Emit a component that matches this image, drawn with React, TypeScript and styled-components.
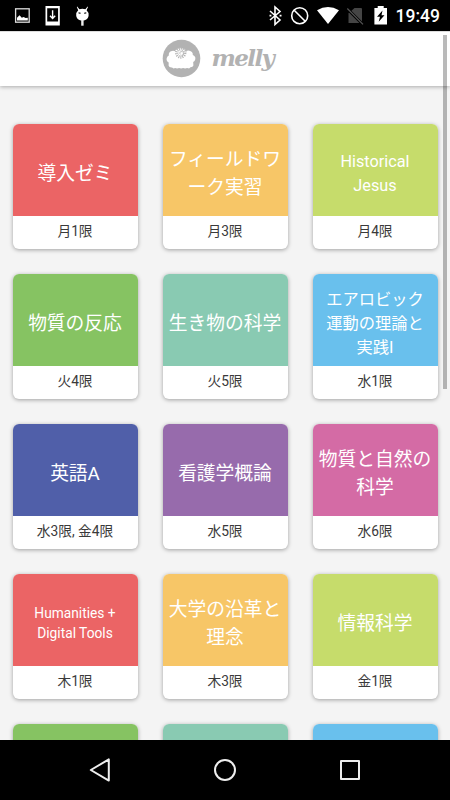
import styled, { createGlobalStyle } from "styled-components";

const GlobalStyle = createGlobalStyle`
  * {
    box-sizing: border-box;
  }
  body {
    margin: 0;
    overflow: hidden;
    background-color: #000;
    font-family: Roboto, "Noto Sans CJK JP", sans-serif;
  }
`;

const Screen = styled.div`
  position: relative;
  width: 450px;
  height: 800px;
  display: flex;
  flex-direction: column;
  overflow: hidden;
`;

const StatusBar = styled.div`
  flex: 0 0 31px;
  height: 31px;
  min-height: 0;
  display: flex;
  justify-content: space-between;
  background-color: #000;
  color: #fff;
`;

const Clock = styled.span`
  width: 60px;
  height: 31px;
  padding-left: 5.5px;
  font-size: 17.5px;
  line-height: 32px;
  font-weight: 500;
`;

const StatusRight = styled.div`
  display: flex;
`;

const Header = styled.header`
  flex: 0 0 55px;
  display: flex;
  justify-content: center;
  gap: 11px;
  padding: 7px 12px 0 0;
  border-top: 1px solid #ddd;
  background-color: #fff;
  box-shadow: 0 1px 4px rgba(0, 0, 0, 0.3);
  z-index: 1;
`;

const LogoText = styled.span`
  width: 65px;
  color: #b2b2b2;
  font-family: "DejaVu Serif", serif;
  font-size: 23px;
  font-style: italic;
  font-weight: bold;
  letter-spacing: -1.6px;
  line-height: 37px;
  white-space: nowrap;
`;

const Content = styled.main`
  flex: 1 1 0;
  overflow: hidden;
  background-color: #f4f4f4;
`;

const ScrollThumb = styled.div`
  position: absolute;
  top: 35px;
  right: 3.5px;
  width: 4px;
  height: 354px;
  background-color: rgba(0, 0, 0, 0.27);
  z-index: 2;
`;

const CardGrid = styled.div`
  display: grid;
  grid-template-columns: repeat(3, 125px);
  gap: 25px;
  padding: 37.5px 12.5px;
`;

const Card = styled.div`
  height: 125px;
  display: flex;
  flex-direction: column;
  overflow: hidden;
  border-radius: 6px;
  background-color: #fff;
  box-shadow: 0 1px 4px rgba(0, 0, 0, 0.35);
`;

const CardTitle = styled.div<{ $color: string; $size: number; $line: number }>`
  flex: 0 0 92.5px;
  display: flex;
  justify-content: center;
  align-items: center;
  padding-top: ${(p) => (p.$size < 15 ? 7 : 9)}px;
  background-color: ${(p) => p.$color};
  color: #fff;
  font-size: ${(p) => p.$size}px;
  line-height: ${(p) => p.$line}px;
  text-align: center;
  white-space: pre;
`;

const CardPeriod = styled.div`
  color: #3a3a3a;
  font-size: 13.75px;
  line-height: 31px;
  text-align: center;
`;

const NavBar = styled.nav`
  flex: 0 0 60px;
  display: flex;
  justify-content: center;
  align-items: center;
  gap: 85px;
  background-color: #000;
  z-index: 1;
`;

const colors = [
  "#eb6465",
  "#f7c667",
  "#c6dc6b",
  "#86c362",
  "#89cab2",
  "#69c0ed",
  "#505fa9",
  "#976bac",
  "#d46ba5",
];

type Course = { title: string; period: string; size?: number; line?: number };

const courses: Course[] = [
  { title: "導入ゼミ", period: "月1限" },
  { title: "フィールドワ\nーク実習", period: "月3限" },
  { title: "Historical\nJesus", period: "月4限", size: 16.25, line: 24 },
  { title: "物質の反応", period: "火4限" },
  { title: "生き物の科学", period: "火5限" },
  {
    title: "エアロビック\n運動の理論と\n実践I",
    period: "水1限",
    size: 16.25,
    line: 24,
  },
  { title: "英語A", period: "水3限, 金4限" },
  { title: "看護学概論", period: "水5限" },
  { title: "物質と自然の\n科学", period: "水6限" },
  { title: "Humanities +\nDigital Tools", period: "木1限", size: 13.75, line: 20 },
  { title: "大学の沿革と\n理念", period: "木3限" },
  { title: "情報科学", period: "金1限" },
  { title: "", period: "" },
  { title: "", period: "" },
  { title: "", period: "" },
];

const NotificationIcons = () => (
  <svg width="110" height="31" viewBox="0 0 110 31">
    <rect x="15.6" y="8.8" width="13.6" height="13.4" fill="none" stroke="#ddd" strokeWidth="1.3" />
    <path d="M17 20.5v-2.8l2.5-2.4 2.3 2.4 1.8-.8 2 1.2 2.2-.3v2.7z" fill="#fff" />
    <path d="M45.5 6h14.3v19.5H45.5zM47.2 8.3v13.2h10.9V8.3z" fill="#fff" fillRule="evenodd" />
    <path d="M52.6 10.3v8M50 15.7l2.6 2.8 2.6-2.8" fill="none" stroke="#fff" strokeWidth="1.4" />
    <path d="M77.2 6.5l2.2 2.7q3-1.1 6 0l2.2-2.7.4.4-1.4 3.3q2.3 2.1 2 5.2c-.2 2.9-2.8 5.1-6.2 5.1s-6-2.2-6.2-5.1q-.3-3.1 2-5.2l-1.4-3.3z" fill="#fff" />
    <path d="M78.5 12.7l2 .7M86.3 12.7l-2 .7" stroke="#111" strokeWidth="1.2" />
    <path d="M82.4 20v5.7" stroke="#eee" strokeWidth="2.4" />
  </svg>
);

const SystemIcons = () => (
  <svg width="130" height="31" viewBox="260 0 130 31">
    <path d="M270 11l10 9-5 4.5V7l5 4.5-10 8.5" fill="none" stroke="#fff" strokeWidth="1.6" />
    <path d="M270.4 15.7h.1M280.5 15.7h.1" stroke="#fff" strokeWidth="1.8" strokeLinecap="square" />
    <circle cx="299.7" cy="15.7" r="8" fill="none" stroke="#fff" strokeWidth="1.6" />
    <path d="M294.2 10.2l11 11" stroke="#fff" strokeWidth="1.6" />
    <path d="M317 10.2q11-6.5 22 0L328 24z" fill="#fff" />
    <path d="M349.5 12.5l5-4.5H361q1 0 1 1v14h-13.5V13z" fill="#454545" />
    <path d="M347.5 9l15.5 15.5" stroke="#000" strokeWidth="3" />
    <path d="M347.3 8.5l15.7 15.8" stroke="#555" strokeWidth="1.2" />
    <path d="M374.4 8h3.3V6h6v2h3.3v16.6h-12.6z" fill="#fff" />
    <path d="M382.5 10.5l-5.5 6.3h3l-1.3 5 5.8-6.5h-3z" fill="#000" />
  </svg>
);

const SheepLogo = () => (
  <svg width="39" height="39" viewBox="0 0 39 39">
    <circle cx="19.5" cy="19.5" r="18.8" fill="#b2b2b2" />
    <path
      d="M10 28.4q-3 .2-3.4-2l.1-3q-2.6-1.3-2-4.2.5-2.2 2.1-2.8-.4-3.9 3.1-4.5 2-.3 3.2.3 1.1-3.4 5.2-3.5 4.4 0 5.7 3.3 3.6-1.2 5.9 1.1 1.1 1.2.9 2.9 3.1 1.2 2.5 4.2-.4 2-2.1 2.8l.2 3.4q-.7 2-3 1.8l-1.3 1.2-2-.4-2 .4-2-.4-2 .4-2-.4-2 .4-2-.4-1.5.4z"
      fill="#fff"
    />
    <circle cx="18.7" cy="14" r="4" fill="none" stroke="#b2b2b2" strokeWidth="3.4" strokeDasharray="0.9 0.95" />
    <path
      d="M18.8 15.5q-2-1.3-.5-2.7 2.4-1 3.2 1 .4 2.8-2.4 3.5M14 10.3q3.4-2.7 7.3-1 2.4 1.2 3 3.8"
      fill="none"
      stroke="#b2b2b2"
      strokeWidth="0.8"
    />
  </svg>
);

const NavIcon = ({ children }: { children: React.ReactNode }) => (
  <svg width="40" height="40" viewBox="0 0 40 40" fill="none" stroke="#eee" strokeWidth="2" strokeLinejoin="round">
    {children}
  </svg>
);

const App = () => {
  return (
    <>
      <GlobalStyle />
      <Screen>
        <StatusBar>
          <NotificationIcons />
          <StatusRight>
            <SystemIcons />
            <Clock>19:49</Clock>
          </StatusRight>
        </StatusBar>
        <Header>
          <SheepLogo />
          <LogoText>melly</LogoText>
        </Header>
        <Content>
          <CardGrid>
            {courses.map((course, i) => (
              <Card key={i}>
                <CardTitle
                  $color={colors[i % colors.length]}
                  $size={course.size ?? 18.75}
                  $line={course.line ?? 28}
                >
                  {course.title}
                </CardTitle>
                <CardPeriod>{course.period}</CardPeriod>
              </Card>
            ))}
          </CardGrid>
        </Content>
        <ScrollThumb />
        <NavBar>
          <NavIcon>
            <path d="M10.8 20l18-10.6v21.2z" />
          </NavIcon>
          <NavIcon>
            <circle cx="20" cy="20" r="10" />
          </NavIcon>
          <NavIcon>
            <path d="M11 11h18v18H11z" />
          </NavIcon>
        </NavBar>
      </Screen>
    </>
  );
};

export default App;
